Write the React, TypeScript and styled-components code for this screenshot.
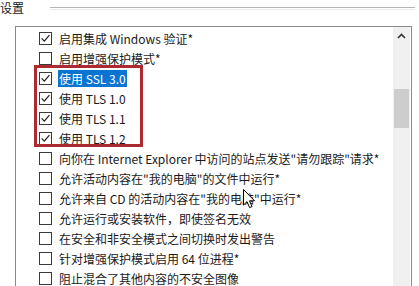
import styled, { createGlobalStyle } from "styled-components";

const GlobalStyle = createGlobalStyle`
    html, body {
        margin: 0;
        padding: 0;
        background: #ffffff;
        overflow: hidden;
    }
    body {
        font-family: "Noto Sans CJK SC", "Noto Sans", sans-serif;
        font-size: 12px;
        color: #1a1a1a;
    }
`;

interface OptionItem {
    label: string;
    checked: boolean;
    selected?: boolean;
}

const topOptions: OptionItem[] = [
    { label: "启用集成 Windows 验证*", checked: true },
    { label: "启用增强保护模式*", checked: false },
];

const markedOptions: OptionItem[] = [
    { label: "使用 SSL 3.0", checked: true, selected: true },
    { label: "使用 TLS 1.0", checked: true },
    { label: "使用 TLS 1.1", checked: true },
    { label: "使用 TLS 1.2", checked: true },
];

const restOptions: OptionItem[] = [
    { label: "向你在 Internet Explorer 中访问的站点发送\"请勿跟踪\"请求*", checked: false },
    { label: "允许活动内容在\"我的电脑\"的文件中运行*", checked: false },
    { label: "允许来自 CD 的活动内容在\"我的电脑\"中运行*", checked: false },
    { label: "允许运行或安装软件，即使签名无效", checked: false },
    { label: "在安全和非安全模式之间切换时发出警告", checked: false },
    { label: "针对增强保护模式启用 64 位进程*", checked: false },
    { label: "阻止混合了其他内容的不安全图像", checked: false },
];

const CheckBox = ({ checked }: { checked: boolean }) => (
    <Box>
        {checked && (
            <svg width="11" height="11" viewBox="0 0 11 11">
                <path
                    d="M1.6 5.4 L4.3 8.2 L9.4 2.2"
                    fill="none"
                    stroke="#1e1e1e"
                    strokeWidth="1.2"
                />
            </svg>
        )}
    </Box>
);

const Option = ({ label, checked, selected }: OptionItem) => (
    <Row>
        <CheckBox checked={checked} />
        <Label $selected={!!selected}>{label}</Label>
    </Row>
);

const App = () => {
    return (
        <>
            <GlobalStyle />
            <Page>
                <Header>
                    <Title>设置</Title>
                    <HeaderLine />
                </Header>
                <ListBox>
                    <Rows>
                        {topOptions.map((o) => (
                            <Option key={o.label} {...o} />
                        ))}
                        <Marked>
                            {markedOptions.map((o) => (
                                <Option key={o.label} {...o} />
                            ))}
                        </Marked>
                        {restOptions.map((o) => (
                            <Option key={o.label} {...o} />
                        ))}
                    </Rows>
                    <ScrollBar>
                        <ArrowButton>
                            <svg width="9" height="6" viewBox="0 0 9 6">
                                <path
                                    d="M1 5 L4.5 1.5 L8 5"
                                    fill="none"
                                    stroke="#333"
                                    strokeWidth="1.6"
                                />
                            </svg>
                        </ArrowButton>
                        <Thumb />
                    </ScrollBar>
                </ListBox>
                <Cursor>
                    <svg width="13" height="20" viewBox="0 0 13 20">
                        <path
                            d="M0.5 0.5 L0.5 16 L4 12.6 L6.6 18.6 L9 17.6 L6.5 11.8 L11.5 11.8 Z"
                            fill="#ffffff"
                            stroke="#000000"
                            strokeWidth="1"
                            strokeLinejoin="round"
                        />
                    </svg>
                </Cursor>
            </Page>
        </>
    );
};
export default App;

const Page = styled.div`
    position: relative;
    width: 419px;
    height: 286px;
    overflow: hidden;
`;

const Header = styled.div`
    display: flex;
    align-items: center;
    height: 14px;
    padding-top: 1px;
    gap: 26px;
`;

const Title = styled.div`
    font-size: 12px;
    line-height: 14px;
    color: #222;
    white-space: nowrap;
`;

const HeaderLine = styled.div`
    width: 365px;
    height: 1px;
    margin-top: -2px;
    background: #b4b4b4;
    box-shadow: 0 2px 0 #ececec;
`;

const ListBox = styled.div`
    display: flex;
    margin: 11px 0 0 15px;
    width: 395px;
    height: 300px;
    border: 1px solid #8a8a8a;
    border-bottom: none;
`;

const Rows = styled.div`
    flex: 1;
    padding-top: 1px;
`;

const Row = styled.div`
    display: flex;
    align-items: center;
    height: 20px;
    padding-left: 23px;
    gap: 6px;
    white-space: nowrap;
`;

const Box = styled.div`
    width: 13px;
    height: 13px;
    box-sizing: border-box;
    border: 1px solid #3a3a3a;
    background: #fff;
    display: flex;
    align-items: center;
    justify-content: center;
    flex-shrink: 0;
`;

const Label = styled.span<{ $selected: boolean }>`
    line-height: 17px;
    padding: 0 1px;
    background: ${({ $selected }) => ($selected ? "#0a74d1" : "transparent")};
    color: ${({ $selected }) => ($selected ? "#ffffff" : "#1a1a1a")};
`;

const Marked = styled.div`
    position: relative;
    &::after {
        content: "";
        position: absolute;
        left: 18px;
        top: -3px;
        width: 109px;
        height: 82px;
        box-sizing: border-box;
        border: 3px solid #ad2a31;
        pointer-events: none;
    }
`;

const ScrollBar = styled.div`
    width: 17px;
    margin-right: 1px;
    background: #f0f0f0;
    display: flex;
    flex-direction: column;
    align-items: center;
`;

const ArrowButton = styled.div`
    height: 17px;
    width: 100%;
    display: flex;
    align-items: center;
    justify-content: center;
`;

const Thumb = styled.div`
    margin-top: 45px;
    width: 15px;
    height: 39px;
    background: #cdcdcd;
`;

const Cursor = styled.div`
    position: absolute;
    left: 243px;
    top: 189px;
    width: 13px;
    height: 20px;
    line-height: 0;
`;
